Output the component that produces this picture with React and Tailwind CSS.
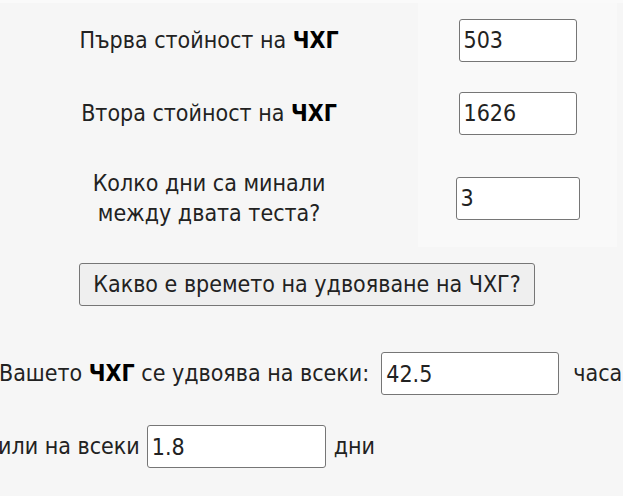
import { useState } from "react";

const font = { fontFamily: '"DejaVu Sans Condensed", "Liberation Sans", sans-serif' };

function Field({ value, onChange, className }) {
  return (
    <input
      type="text"
      value={value}
      onChange={(e) => onChange(e.target.value)}
      className={
        "h-[43px] rounded-[3px] border border-[#767676] bg-white px-[4px] text-[23px] text-[#222] outline-none " +
        className
      }
    />
  );
}

export default function App() {
  const [first, setFirst] = useState("503");
  const [second, setSecond] = useState("1626");
  const [days, setDays] = useState("3");
  const [hours, setHours] = useState("42.5");
  const [daysOut, setDaysOut] = useState("1.8");

  return (
    <div className="min-h-screen w-full overflow-hidden bg-[#f6f6f6] text-[23px] text-[#222]" style={font}>
      <div className="h-[3px] w-full bg-[#fafafa]" />

      <div className="flex w-[617px]">
        <div className="flex w-[418px] flex-col">
          <div className="flex h-[74px] items-center justify-center leading-[30px]">
            Първа стойност на&nbsp;<b className="text-black">ЧХГ</b>
          </div>
          <div className="flex h-[72px] items-center justify-center leading-[30px]">
            Втора стойност на&nbsp;<b className="text-black">ЧХГ</b>
          </div>
          <div className="flex h-[98px] items-center justify-center text-center leading-[30px]">
            Колко дни са минали
            <br />
            между двата теста?
          </div>
        </div>
        <div className="flex w-[199px] flex-col bg-[#f9f9f9]">
          <div className="flex h-[74px] items-center justify-center">
            <Field value={first} onChange={setFirst} className="w-[118px]" />
          </div>
          <div className="flex h-[72px] items-center justify-center">
            <Field value={second} onChange={setSecond} className="w-[118px]" />
          </div>
          <div className="flex h-[98px] items-center justify-center">
            <Field value={days} onChange={setDays} className="w-[124px]" />
          </div>
        </div>
      </div>

      <div className="flex w-[614px] justify-center pt-[16px]">
        <button className="h-[43px] w-[456px] rounded-[3px] border border-[#767676] bg-[#efefef] text-[23px] text-[#222]">
          Какво е времето на удвояване на ЧХГ?
        </button>
      </div>

      <div className="ml-[-1px] mt-[46px] flex items-center whitespace-nowrap">
        <span>
          Вашето <b className="text-black">ЧХГ</b> се удвоява на всеки:
        </span>
        <Field value={hours} onChange={setHours} className="ml-[12px] w-[178px] shrink-0" />
        <span className="ml-[14px]">часа</span>
      </div>

      <div className="ml-[-2px] mt-[30px] flex items-center whitespace-nowrap">
        <span>или на всеки</span>
        <Field value={daysOut} onChange={setDaysOut} className="ml-[7px] w-[179px] shrink-0" />
        <span className="ml-[8px]">дни</span>
      </div>
    </div>
  );
}
